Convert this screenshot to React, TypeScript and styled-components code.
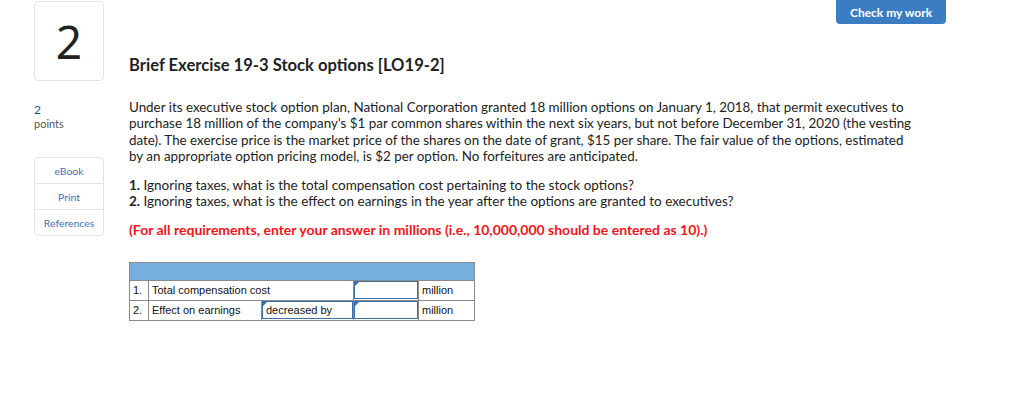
import React from "react";
import styled, { createGlobalStyle } from "styled-components";

const Global = createGlobalStyle`
  html, body { margin: 0; padding: 0; background: #fff; }
  body { font-family: Lato, "Open Sans", Arial, sans-serif; color: #222; }
`;

const Page = styled.div`
  display: grid;
  grid-template-columns: 129px 1fr;
  width: 1024px;
  height: 405px;
  position: relative;
`;

const Side = styled.div`
  display: flex;
  flex-direction: column;
  padding-left: 34px;
  padding-top: 1px;
`;

const NumBox = styled.div`
  width: 68px;
  height: 78px;
  border: 1px solid #e4e4e4;
  border-radius: 4px;
  display: flex;
  align-items: center;
  justify-content: center;
  font-size: 46px;
  font-family: "Noto Sans", sans-serif;
  color: #222;
`;

const Points = styled.div`
  margin-top: 22px;
  display: flex;
  flex-direction: column;
  font-size: 11px;
  line-height: 14px;
  color: #555;
  & > b { font-weight: 400; color: #1f4f8f; font-size: 12px; }
`;

const Menu = styled.div`
  margin-top: 26px;
  width: 68px;
  border: 1px solid #e4e4e4;
  border-radius: 4px;
  display: flex;
  flex-direction: column;
`;

const MenuItem = styled.div<{ $last?: boolean }>`
  height: 25px;
  display: flex;
  align-items: center;
  justify-content: center;
  font-size: 10.4px;
  color: #3b73b8;
  border-bottom: ${(p) => (p.$last ? "none" : "1px solid #e4e4e4")};
`;

const Main = styled.div`
  padding-top: 54px;
  display: flex;
  flex-direction: column;
`;

const Title = styled.h1`
  margin: 0;
  font-size: 16.6px;
  font-weight: 700;
  color: #222;
  line-height: 22px;
`;

const Para = styled.p`
  margin: 23px 0 0 0;
  font-size: 13.4px;
  line-height: 16.3px;
  color: #222;
  white-space: nowrap;
`;

const Questions = styled.div`
  margin-top: 13px;
  font-size: 13.5px;
  line-height: 16.3px;
  white-space: nowrap;
  & b { font-weight: 700; }
`;

const Red = styled.div`
  margin-top: 11px;
  font-size: 14px;
  font-weight: 700;
  color: #f0141e;
  white-space: nowrap;
`;

const Table = styled.table`
  margin-top: 24px;
  border-collapse: collapse;
  width: 346px;
  font-family: "Liberation Sans", Arial, sans-serif;
  font-size: 11px;
  color: #111;
  & td { border: 1px solid #8a8a8a; padding: 0 3px; height: 19px; }
`;

const Head = styled.td`
  background: #77aee0;
  height: 17px !important;
`;

const InputCell = styled.td`
  padding: 0 !important;
`;

const Box = styled.div`
  position: relative;
  height: 18px;
  border: 1.5px solid #3c6ea8;
  box-sizing: border-box;
  display: flex;
  align-items: center;
  padding-left: 3px;
  &::before {
    content: "";
    position: absolute;
    top: 0;
    left: 0;
    border-left: 4px solid #2f6fc0;
    border-bottom: 4px solid transparent;
  }
`;

const Button = styled.button`
  position: absolute;
  top: 0;
  left: 836px;
  width: 110px;
  height: 24px;
  border: none;
  border-radius: 0 0 4px 4px;
  background: #3a7dc3;
  color: #fff;
  font-family: Lato, sans-serif;
  font-weight: 700;
  font-size: 12px;
`;

export default function App() {
  return (
    <>
      <Global />
      <Page>
        <Button>Check my work</Button>
        <Side>
          <NumBox>2</NumBox>
          <Points>
            <b>2</b>
            <span>points</span>
          </Points>
          <Menu>
            <MenuItem>eBook</MenuItem>
            <MenuItem>Print</MenuItem>
            <MenuItem $last>References</MenuItem>
          </Menu>
        </Side>
        <Main>
          <Title>Brief Exercise 19-3 Stock options [LO19-2]</Title>
          <Para>
            Under its executive stock option plan, National Corporation granted 18 million options on January 1, 2018, that permit executives to<br />
            purchase 18 million of the company's $1 par common shares within the next six years, but not before December 31, 2020 (the vesting<br />
            date). The exercise price is the market price of the shares on the date of grant, $15 per share. The fair value of the options, estimated<br />
            by an appropriate option pricing model, is $2 per option. No forfeitures are anticipated.
          </Para>
          <Questions>
            <div><b>1.</b> Ignoring taxes, what is the total compensation cost pertaining to the stock options?</div>
            <div><b>2.</b> Ignoring taxes, what is the effect on earnings in the year after the options are granted to executives?</div>
          </Questions>
          <Red>(For all requirements, enter your answer in millions (i.e., 10,000,000 should be entered as 10).)</Red>
          <Table>
            <tbody>
              <tr><Head colSpan={5} /></tr>
              <tr>
                <td style={{ width: 12 }}>1.</td>
                <td colSpan={2}>Total compensation cost</td>
                <InputCell style={{ width: 64 }}><Box /></InputCell>
                <td style={{ width: 49 }}>million</td>
              </tr>
              <tr>
                <td>2.</td>
                <td style={{ width: 106 }}>Effect on earnings</td>
                <InputCell><Box>decreased by</Box></InputCell>
                <InputCell><Box /></InputCell>
                <td>million</td>
              </tr>
            </tbody>
          </Table>
        </Main>
      </Page>
    </>
  );
}
